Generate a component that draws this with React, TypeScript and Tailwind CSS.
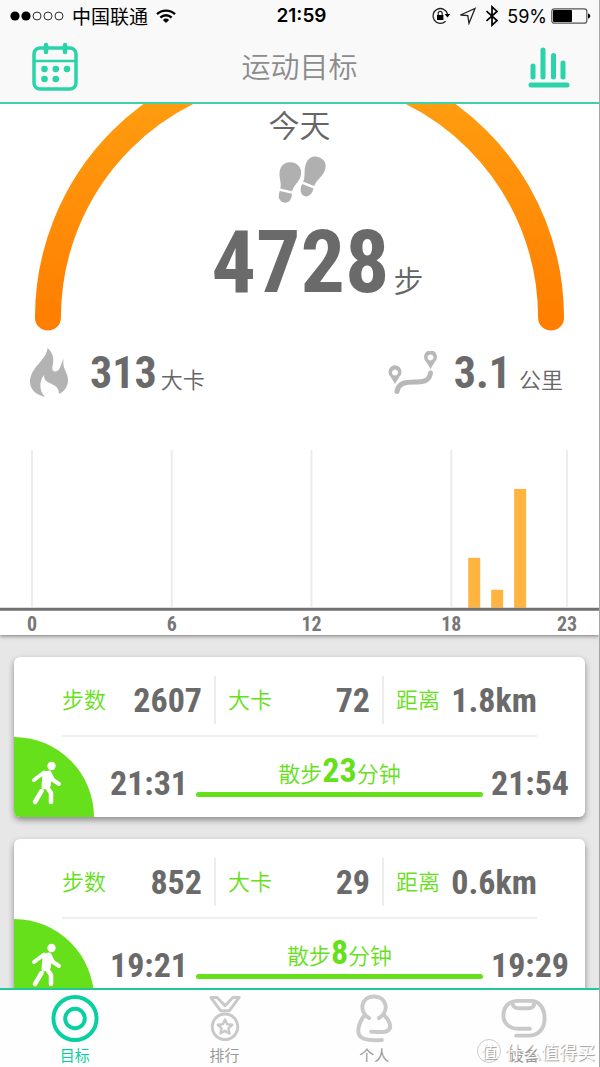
import React from 'react';

interface Walk {
  steps: string;
  calories: string;
  distance: string;
  start: string;
  end: string;
  minutes: string;
}

const walks: Walk[] = [
  { steps: '2607', calories: '72', distance: '1.8km', start: '21:31', end: '21:54', minutes: '23' },
  { steps: '852', calories: '29', distance: '0.6km', start: '19:21', end: '19:29', minutes: '8' },
];

const ticks = [
  { hour: 0, x: 32 },
  { hour: 6, x: 172 },
  { hour: 12, x: 312 },
  { hour: 18, x: 452 },
  { hour: 23, x: 568 },
];

const bars = [
  { x: 469, height: 50 },
  { x: 492, height: 18 },
  { x: 515, height: 119 },
];

const condensed = "font-['Roboto_Condensed',sans-serif] font-bold";
const num = `${condensed} text-[#6a6a6a]`;

const StatusBar: React.FC = () => (
  <div className="grid h-8 grid-cols-3 items-center px-2 text-black">
    <div className="flex items-center">
      <svg width="56" height="12" viewBox="0 0 56 12">
        <circle cx="7" cy="6" r="4.6" />
        <circle cx="18" cy="6" r="4.6" />
        <circle cx="29" cy="6" r="4" fill="none" stroke="#000" strokeWidth="0.8" />
        <circle cx="40" cy="6" r="4" fill="none" stroke="#000" strokeWidth="0.8" />
        <circle cx="51" cy="6" r="4" fill="none" stroke="#000" strokeWidth="0.8" />
      </svg>
      <span className="ml-2 text-[19px] leading-6">中国联通</span>
      <svg className="ml-2" width="20" height="16" viewBox="0 0 20 16" fill="none" stroke="#000" strokeWidth="2.4">
        <path d="M1 6.2a13 13 0 0 1 18 0" />
        <path d="M4.4 9.6a8 8 0 0 1 11.2 0" />
        <path d="M10 15l-3.1-3.1a4.4 4.4 0 0 1 6.2 0z" fill="#000" stroke="none" />
      </svg>
    </div>
    <span className="pl-1 text-center font-[Inter,sans-serif] text-[19px] leading-6 font-semibold">21:59</span>
    <div className="flex items-center justify-end">
      <svg width="20" height="18" viewBox="0 0 20 18" fill="none" stroke="#222">
        <path d="M16.6 7.2A7.4 7.4 0 1 0 14.6 14.2" strokeWidth="1.3" />
        <path d="M13.6 7h5.6l-2.7 3.6z" fill="#000" stroke="none" />
        <rect x="6" y="8" width="6.4" height="5" fill="#000" stroke="none" />
        <path d="M7.2 8V6.4a2 2 0 0 1 4 0V8" strokeWidth="1.2" />
      </svg>
      <svg className="ml-2" width="18" height="18" viewBox="0 0 18 18" fill="none" stroke="#222" strokeWidth="1.3">
        <path d="M1.5 8L16 1.5 10 16.3 8.8 8.6z" />
      </svg>
      <svg className="ml-2" width="14" height="22" viewBox="0 0 14 22" fill="none" stroke="#000" strokeWidth="1.7">
        <path d="M1.5 6.2l10.5 9.4-5 4.6V1.8l5 4.6L1.5 15.8" />
      </svg>
      <span className="ml-2 font-[Inter,sans-serif] text-[18px]">59%</span>
      <svg className="ml-1" width="40" height="16" viewBox="0 0 40 16">
        <rect x="0.8" y="0.8" width="35" height="14.4" rx="2.5" fill="none" stroke="#555" strokeWidth="1.2" />
        <rect x="2" y="2" width="19" height="12" rx="1" />
        <path d="M37 5.5c3 .4 3 4.6 0 5z" />
      </svg>
    </div>
  </div>
);

const Header: React.FC = () => (
  <header className="border-b-2 border-[#3fd0aa] bg-[#f9f9f9]">
    <StatusBar />
    <div className="flex h-[70px] items-center justify-between px-7">
      <button aria-label="日历">
        <svg width="54" height="50" viewBox="0 0 54 50" fill="none" stroke="#2bd3a8" strokeLinecap="round">
          <rect x="6" y="6" width="42" height="41" rx="6" strokeWidth="3.5" />
          <path d="M6 19h42" strokeWidth="2.5" />
          <path d="M18 3v7M37 3v7" strokeWidth="4.5" />
          <g fill="#2bd3a8" stroke="none">
            <circle cx="16.5" cy="27" r="3.3" />
            <circle cx="27.8" cy="27" r="3.3" />
            <circle cx="39" cy="27" r="3.3" />
            <circle cx="16.5" cy="37" r="3.3" />
            <circle cx="27.8" cy="37" r="3.3" />
          </g>
        </svg>
      </button>
      <h1 className="pb-1 text-[29px] leading-[44px] font-[350] text-[#8c8c8c]">运动目标</h1>
      <button aria-label="统计">
        <svg width="54" height="46" viewBox="0 0 54 46" stroke="#2bd3a8" strokeWidth="5" strokeLinecap="round">
          <path d="M16 22v11M26 6v27M36.5 11.5V33M46 19v14M14 41h36" />
        </svg>
      </button>
    </div>
  </header>
);

const Footprints = () => (
  <svg width="52" height="48" viewBox="0 0 52 48" fill="#b0b0b0">
    <g transform="rotate(13 14 26)">
      <path d="M13 6C20 5.500 25.500 10 25 17.500C24.600 24 20.500 27 20 34L8 34C8 28 4 24 3.500 17.500C3 11 7 6.500 13 6z" />
      <path d="M8 36.500H20.500C21.500 42 19.500 47 14.500 47S7 42 8 36.500z" />
    </g>
    <g transform="rotate(22 38 20)">
      <path d="M38 0C44.500 0 48 4.500 47.800 11C47.500 18 43.800 22 43.800 28.500H32C32 22 28 18 27.800 11C27.500 4.500 31.500 0 38 0z" />
      <path d="M32 31H44C45 36.500 42.500 41.500 38.300 41.500S31 36.500 32 31z" />
    </g>
  </svg>
);

const Goal: React.FC = () => (
  <section>
    <div className="grid">
      <svg className="w-full [grid-area:1/1]" viewBox="0 0 600 228" fill="none">
        <defs>
          <linearGradient id="ring" x1="0" y1="0" x2="0" y2="228" gradientUnits="userSpaceOnUse">
            <stop offset="0" stopColor="#ff9c0f" />
            <stop offset="1" stopColor="#ff7d00" />
          </linearGradient>
        </defs>
        <path d="M48 214a252 252 0 0 1 504 0" stroke="url(#ring)" strokeWidth="26" strokeLinecap="round" />
      </svg>
      <div className="flex flex-col items-center text-[#666] [grid-area:1/1]">
        <h2 className="text-[31px] leading-10 font-[350]">今天</h2>
        <div className="mt-3">
          <Footprints />
        </div>
        <p className="ml-9 flex h-[110px] items-baseline gap-1">
          <strong className={`${num} text-[88px] leading-[116px]`}>4728</strong>
          <span className="text-[30px] font-[350]">步</span>
        </p>
      </div>
    </div>
    <div className="flex h-[82px] items-center justify-between px-7 text-[#666]">
      <p className="flex items-baseline">
        <svg className="self-center" width="42" height="52" viewBox="0 0 42 52" fill="#b3b3b3">
          <path d="M19.500 1C19 13 2 20 2 35C2 42 8 48 17 50C11 44 11 34 16 28C15.500 39 31 34 31 47C37 44 40 39 40 33C40 25 34 22 35.500 12C33 15 33 24 27.500 24.500C19 24 32 12 19.500 1z" />
        </svg>
        <strong className={`${num} ml-5 text-[44px] leading-[64px]`}>313</strong>
        <span className="ml-1 text-[22px] font-[350]">大卡</span>
      </p>
      <p className="flex items-baseline pr-2">
        <svg className="self-center" width="50" height="44" viewBox="0 0 50 44" fill="#b8b8b8">
          <path fillRule="evenodd" d="M7 33L2.500 25.500A6.500 6.500 0 1 1 11.500 25.500zM7 18.500a3 3 0 1 0 .01 0z" />
          <path fillRule="evenodd" d="M42.500 18L38 10.500A6.500 6.500 0 1 1 47 10.500zM42.500 3.500a3 3 0 1 0 .01 0z" />
          <path d="M9 40.500C12 22 40 40 42.500 22" fill="none" stroke="#b8b8b8" strokeWidth="5" strokeLinecap="round" />
        </svg>
        <strong className={`${num} ml-4 text-[44px] leading-[64px]`}>3.1</strong>
        <span className="ml-2 text-[22px] font-[350]">公里</span>
      </p>
    </div>
  </section>
);

const HourChart: React.FC = () => (
  <svg className="mt-9 w-full" viewBox="0 0 600 186">
    {ticks.map(({ hour, x }) => (
      <g key={hour}>
        <path d={`M${x} 0v157`} stroke="#ececec" strokeWidth="2" />
        <text x={x} y="181" textAnchor="middle" fontSize="20" fill="#777" className={condensed}>{hour}</text>
      </g>
    ))}
    {bars.map(({ x, height }) => (
      <rect key={x} x={x} y={158 - height} width="12" height={height} fill="#ffb340" />
    ))}
    <path d="M0 159.500h600" stroke="#717171" strokeWidth="3" />
  </svg>
);

const WalkCard: React.FC<{ walk: Walk }> = ({ walk }) => (
  <article className="overflow-hidden rounded-md bg-white shadow-[0_3px_6px_rgba(0,0,0,0.4)]">
    <dl className="mx-12 grid h-[80px] grid-cols-[154px_168px_1fr] items-center border-b-2 border-[#efefef] pt-2">
      {[
        ['步数', walk.steps],
        ['大卡', walk.calories],
        ['距离', walk.distance],
      ].map(([label, value]) => (
        <div key={label} className="flex h-12 items-center justify-between border-r-2 border-[#ececec] pr-3 pl-3 first:pl-0 last:border-0 last:pr-0">
          <dt className="pb-1 text-[22px] font-[350] text-[#66e01b]">{label}</dt>
          <dd className={`${num} text-[34px]`}>{value}</dd>
        </div>
      ))}
    </dl>
    <div className="flex h-20 items-end pr-4">
      <div className="h-20 w-20 shrink-0 rounded-tr-full bg-[#66e01b]">
        <svg width="80" height="80" viewBox="0 0 80 80" fill="none" stroke="#fff" strokeLinecap="round" strokeLinejoin="round">
          <circle cx="37.5" cy="29" r="4.2" fill="#fff" stroke="none" />
          <path d="M31 37L35 36L34.500 48L30 50z" fill="#fff" strokeWidth="5" />
          <path d="M30 35.500L20 43M36 37L39 43L45 47" strokeWidth="4" />
          <path d="M33 50L37 56V65M27.500 54L21 65" strokeWidth="4.5" />
        </svg>
      </div>
      <time className={`${num} ml-4 pb-3 text-[34px] leading-[44px]`}>{walk.start}</time>
      <div className="mx-2 flex-1 pb-5">
        <p className="flex items-baseline justify-center text-[22px] leading-10 font-[350] text-[#66e01b]">
          散步<strong className={`${condensed} text-[34px]`}>{walk.minutes}</strong>分钟
        </p>
        <div className="h-[5px] rounded-full bg-[#66e01b]" />
      </div>
      <time className={`${num} pb-3 text-[34px] leading-[44px]`}>{walk.end}</time>
    </div>
  </article>
);

const tabs = [
  {
    label: '目标',
    color: 'text-[#08d0a0]',
    icon: (
      <>
        <circle cx="25" cy="25" r="22" />
        <circle cx="25" cy="25" r="10" />
      </>
    ),
  },
  {
    label: '排行',
    color: 'text-[#c9c9c9]',
    icon: (
      <g strokeWidth="3">
        <path d="M10.500 3.500H17L25 12L33 3.500H39.500L29.500 17H20.500z" />
        <circle cx="25" cy="33.500" r="13" />
        <path d="M25 26l2.200 4.800 5.200.6-3.900 3.600 1.100 5.300-4.600-2.700-4.600 2.700 1.100-5.300-3.900-3.600 5.200-.6z" strokeWidth="2.5" />
      </g>
    ),
  },
  {
    label: '个人',
    color: 'text-[#c9c9c9]',
    icon: (
      <path d="M20 24.500C9 18 11.500 2.500 25 2.500S41 18 30 24.500M15 22C10.500 28 9 33 9 38C9 46 18 48 33 47M36 22C39 26 42 29 41.500 34C40 40 33 39 22 38.500" />
    ),
  },
  {
    label: '设备',
    color: 'text-[#c9c9c9]',
    icon: (
      <path d="M31 35.500H20C10 35.500 4 30 4 22C4 12 11 7 18 7H32C41 7 46 15 46 25C46 36 39 42.500 30 42.500H17M13.500 8.500C13.500 13 15 14.500 19 14.500H30C34 14.500 35.500 13 35.500 8.500" />
    ),
  },
];

const TabBar: React.FC = () => (
  <nav className="relative grid grid-cols-4 border-t-2 border-[#1fc99b] bg-[#fefefe]">
    {tabs.map(({ label, color, icon }) => (
      <button key={label} className={`flex h-[77px] flex-col items-center pt-1 ${color}`}>
        <svg width="50" height="50" viewBox="0 0 50 50" fill="none" stroke="currentColor" strokeWidth="4" strokeLinecap="round" strokeLinejoin="round">
          {icon}
        </svg>
        <span className={`text-[15px] leading-6 ${label === '目标' ? '' : 'text-[#999]'}`}>{label}</span>
      </button>
    ))}
    <div className="pointer-events-none absolute right-1 bottom-1 flex items-center gap-1 text-white [text-shadow:1px_1px_1px_#999]">
      <span className="flex h-6 w-6 items-center justify-center rounded-full border border-[#ccc] text-[16px]">值</span>
      <span className="text-[18px] leading-6">什么值得买</span>
    </div>
  </nav>
);

const App: React.FC = () => (
  <div className="flex h-screen flex-col border-r border-[#a5a5a5] bg-[#e7e7e7] font-['Noto_Sans_CJK_SC',sans-serif]">
    <Header />
    <main className="min-h-0 flex-1 overflow-hidden">
      <div className="bg-white shadow-[0_1px_4px_rgba(0,0,0,0.5)]">
        <Goal />
        <HourChart />
      </div>
      <div className="flex flex-col gap-[22px] px-[14px] py-[22px]">
        {walks.map((walk) => (
          <WalkCard key={walk.start} walk={walk} />
        ))}
      </div>
    </main>
    <TabBar />
  </div>
);

export default App;
